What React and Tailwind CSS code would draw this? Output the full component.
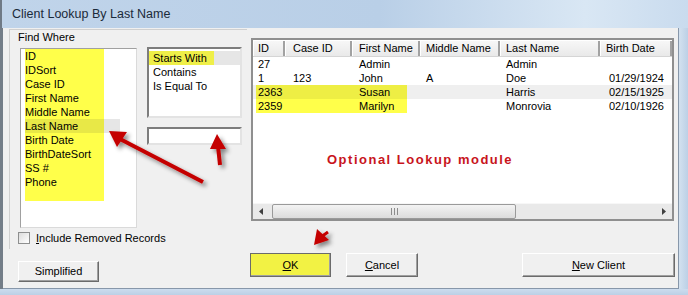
const fields = ['ID', 'IDSort', 'Case ID', 'First Name', 'Middle Name', 'Last Name', 'Birth Date', 'BirthDateSort', 'SS #', 'Phone']

const cols = [
  { name: 'ID', w: 'w-[32px]', pad: 'pl-[5px]' },
  { name: 'Case ID', w: 'w-[67px]', pad: 'pl-[8px]' },
  { name: 'First Name', w: 'w-[68px]', pad: 'pl-[7px]' },
  { name: 'Middle Name', w: 'w-[80px]', pad: 'pl-[6px]' },
  { name: 'Last Name', w: 'w-[100px]', pad: 'pl-[6px]' },
  { name: 'Birth Date', w: 'w-[72px]', pad: 'pl-[6px]' },
]

const rows = [
  { cells: ['27', '', 'Admin', '', 'Admin', ''], bg: 'bg-white' },
  { cells: ['1', '123', 'John', 'A', 'Doe', '01/29/1924'], bg: 'bg-white' },
  {
    cells: ['2363', '', 'Susan', '', 'Harris', '02/15/1925'],
    bg: 'bg-[linear-gradient(to_right,#efefef_3px,#eeee44_3px,#eeee44_154px,#efefef_154px)]',
  },
  {
    cells: ['2359', '', 'Marilyn', '', 'Monrovia', '02/10/1926'],
    bg: 'bg-[linear-gradient(to_right,#ffffff_3px,#ffff4a_3px,#ffff4a_154px,#ffffff_154px)]',
  },
]

function WinButton({ children, className = '' }) {
  return (
    <div
      className={`flex items-center justify-center border border-t-white border-l-white border-r-[#6b6b6b] border-b-[#6b6b6b] shadow-[inset_-1px_-1px_0_#a0a0a0] ${className}`}
    >
      {children}
    </div>
  )
}

function Arrows() {
  return (
    <svg className="pointer-events-none absolute left-0 top-0" width="688" height="295">
      <defs>
        <filter id="sh" x="-50%" y="-50%" width="200%" height="200%">
          <feDropShadow dx="3" dy="3" stdDeviation="2" floodColor="#000" floodOpacity="0.45" />
        </filter>
      </defs>
      <g fill="#c40000" stroke="#c40000" filter="url(#sh)">
        <line x1="203" y1="182" x2="120" y2="139" strokeWidth="4" />
        <polygon points="109,131 127,132 117,147" stroke="none" />
        <line x1="220" y1="165" x2="218" y2="146" strokeWidth="4" />
        <polygon points="217,134 226,149 210,149" stroke="none" />
        <line x1="321" y1="237" x2="328" y2="232" strokeWidth="3" />
        <polygon points="314,245 317,229 329,240" stroke="none" />
      </g>
    </svg>
  )
}

export default function App() {
  return (
    <div className="relative w-[688px] h-[295px] overflow-hidden bg-[#c6d8ec] font-['Liberation_Sans',Arial,sans-serif] text-[11px] text-black">
      {/* title bar */}
      <div className="h-[28px] flex items-center pl-[10px] border-l-2 border-[#6f7a86] bg-[linear-gradient(to_right,#c0d4ea_0%,#b9cfe7_55%,#d9e7f4_85%,#c9dbee_100%)]">
        <span className="text-[12.5px] text-[#1b2a3a] leading-none">Client Lookup By Last Name</span>
      </div>

      <div className="flex h-[261px]">
        <div className="w-[3px] bg-[#737d88]" />
        <div className="w-[676px] h-full bg-[#f0f0f0] border-r border-b border-[#8797aa] pl-[6px] pt-[1px] flex flex-col">
          <div className="flex items-start">
            {/* Find Where panel */}
            <div className="w-[238px] h-[220px] border-l border-t border-[#d0d0d0]">
              <div className="pl-[8px] leading-[13px] pt-[1px]">Find Where</div>
              <div className="flex items-start mt-[3px] ml-[10px]">
                <div className="mt-[1px] w-[117px] h-[180px] bg-white border border-t-[#a0a0a0] border-l-[#a0a0a0] border-r-[#dadada] border-b-[#dadada] pl-[4px]">
                  <div className="w-[79px] bg-[#ffff4a] leading-[14px]">
                    {fields.map((f) => (
                      <div
                        key={f}
                        className={
                          f === 'Last Name'
                            ? 'w-[95px] bg-[linear-gradient(to_right,#e8e847_79px,#e6e6e6_79px)]'
                            : ''
                        }
                      >
                        {f}
                      </div>
                    ))}
                    <div className="h-[12px]" />
                  </div>
                </div>
                <div className="ml-[10px] w-[95px] flex flex-col">
                  <div className="h-[71px] bg-white border-2 border-t-[#7d7d7d] border-l-[#7d7d7d] border-r-[#e3e3e3] border-b-[#e3e3e3] leading-[14px]">
                    <div className="mt-[2px] pl-[4px] bg-[linear-gradient(to_right,#efef48_65px,#e6e6e6_65px)]">Starts With</div>
                    <div className="pl-[4px]">Contains</div>
                    <div className="pl-[4px]">Is Equal To</div>
                  </div>
                  <div className="mt-[9px] h-[18px] bg-white border-2 border-t-[#7d7d7d] border-l-[#7d7d7d] border-r-[#e3e3e3] border-b-[#e3e3e3]" />
                </div>
              </div>
              <div className="flex items-center mt-[4px] ml-[8px]">
                <div className="w-[12px] h-[12px] border border-[#8e8f8f] bg-[linear-gradient(135deg,#dcdcdc,#ffffff)]" />
                <span className="ml-[6px] leading-[12px]">
                  <span className="underline">I</span>nclude Removed Records
                </span>
              </div>
            </div>

            {/* results grid */}
            <div className="ml-[4px] mt-[9px] w-[423px] h-[183px] border-2 border-[#8f8f8f] bg-white pt-[1px] flex flex-col">
              <div className="flex h-[16px] bg-[linear-gradient(to_bottom,#f7f7f7,#e9e9e9)] border-b border-[#d5d5d5]">
                {cols.map((c) => (
                  <div
                    key={c.name}
                    className={`${c.w} ${c.pad} leading-[15px] border-r-2 border-[#a2a2a2] shadow-[inset_1px_0_0_#ffffff] whitespace-nowrap overflow-hidden`}
                  >
                    {c.name}
                  </div>
                ))}
              </div>
              <div className="h-[146px] flex flex-col">
                {rows.map((r, i) => (
                  <div key={i} className={`flex h-[14px] leading-[14px] ${r.bg}`}>
                    {r.cells.map((v, j) => (
                      <div
                        key={j}
                        className={`${cols[j].w} whitespace-nowrap ${j === 5 ? 'text-right pr-[8px]' : cols[j].pad}`}
                      >
                        {v}
                      </div>
                    ))}
                  </div>
                ))}
                <div className="mt-[40px] ml-[74px] text-[13px] font-bold tracking-[1.5px] text-[#c8141c] leading-[14px]">
                  Optional Lookup module
                </div>
              </div>
              <div className="flex h-[16px] bg-[#e9e9e9] border-t border-[#f7f7f7]">
                <div className="w-[16px] flex items-center justify-center">
                  <svg width="4" height="7" viewBox="0 0 4 7"><polygon points="4,0 0,3.5 4,7" fill="#404040" /></svg>
                </div>
                <div className="ml-[3px] w-[244px] h-[15px] rounded-[2px] border border-[#9a9a9a] bg-[linear-gradient(to_bottom,#f3f3f3,#dcdcdc)] flex items-center justify-center gap-[2px]">
                  <div className="w-px h-[7px] bg-[#8c8c8c]" />
                  <div className="w-px h-[7px] bg-[#8c8c8c]" />
                  <div className="w-px h-[7px] bg-[#8c8c8c]" />
                </div>
                <div className="flex-1" />
                <div className="w-[16px] flex items-center justify-center">
                  <svg width="4" height="7" viewBox="0 0 4 7"><polygon points="0,0 4,3.5 0,7" fill="#404040" /></svg>
                </div>
              </div>
            </div>
          </div>

          {/* buttons */}
          <div className="flex items-start">
            <WinButton className="ml-[9px] mt-[12px] w-[81px] h-[21px]">Simplified</WinButton>
            <div className="ml-[151px] mt-[4px] w-[81px] h-[24px] flex items-center justify-center bg-[#f2f244] border border-[#6b6b6b] shadow-[inset_-1px_-1px_0_#a0a0a0]">
              <span><span className="underline">O</span>K</span>
            </div>
            <WinButton className="ml-[15px] mt-[4px] w-[72px] h-[24px]">
              <span><span className="underline">C</span>ancel</span>
            </WinButton>
            <WinButton className="ml-[104px] mt-[4px] w-[153px] h-[24px]">
              <span><span className="underline">N</span>ew Client</span>
            </WinButton>
          </div>
        </div>
        <div className="w-[9px] bg-[linear-gradient(to_right,#d3e1ef,#bcd0e6)]" />
      </div>
      <div className="h-[6px] bg-[linear-gradient(to_bottom,#cddcee,#bcd0e6)]" />

      <Arrows />
    </div>
  )
}
